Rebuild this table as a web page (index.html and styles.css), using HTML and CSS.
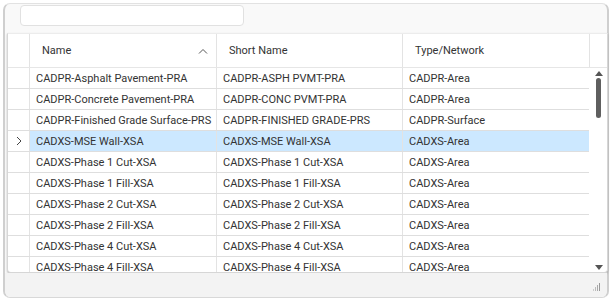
FILE: index.html
```html
<!DOCTYPE html>
<html lang="en">
<head>
    <meta charset="UTF-8">
    <title>Surface Styles</title>
    <link rel="stylesheet" href="styles.css">
</head>
<body>
    <div class="window">
        <div class="toolbar">
            <input class="search" type="text">
        </div>

        <div class="grid">
            <div class="grid-body">
                <div class="row header">
                    <div class="cell marker"></div>
                    <div class="cell">Name
                        <svg class="sort" width="10" height="6" viewBox="0 0 10 6"><path d="M1 5.5 L5 1.5 L9 5.5" fill="none" stroke="#555" stroke-width="1"/></svg>
                    </div>
                    <div class="cell">Short Name</div>
                    <div class="cell">Type/Network</div>
                    <div class="cell spare"></div>
                </div>
                <div class="row"><div class="cell marker"></div><div class="cell">CADPR-Asphalt Pavement-PRA</div><div class="cell">CADPR-ASPH PVMT-PRA</div><div class="cell">CADPR-Area</div></div>
                <div class="row"><div class="cell marker"></div><div class="cell">CADPR-Concrete Pavement-PRA</div><div class="cell">CADPR-CONC PVMT-PRA</div><div class="cell">CADPR-Area</div></div>
                <div class="row"><div class="cell marker"></div><div class="cell">CADPR-Finished Grade Surface-PRS</div><div class="cell">CADPR-FINISHED GRADE-PRS</div><div class="cell">CADPR-Surface</div></div>
                <div class="row selected"><div class="cell marker">
                    <svg width="6" height="10" viewBox="0 0 6 10"><path d="M1 1 L5 5 L1 9" fill="none" stroke="#444" stroke-width="1"/></svg>
                </div><div class="cell">CADXS-MSE Wall-XSA</div><div class="cell">CADXS-MSE Wall-XSA</div><div class="cell">CADXS-Area</div></div>
                <div class="row"><div class="cell marker"></div><div class="cell">CADXS-Phase 1 Cut-XSA</div><div class="cell">CADXS-Phase 1 Cut-XSA</div><div class="cell">CADXS-Area</div></div>
                <div class="row"><div class="cell marker"></div><div class="cell">CADXS-Phase 1 Fill-XSA</div><div class="cell">CADXS-Phase 1 Fill-XSA</div><div class="cell">CADXS-Area</div></div>
                <div class="row"><div class="cell marker"></div><div class="cell">CADXS-Phase 2 Cut-XSA</div><div class="cell">CADXS-Phase 2 Cut-XSA</div><div class="cell">CADXS-Area</div></div>
                <div class="row"><div class="cell marker"></div><div class="cell">CADXS-Phase 2 Fill-XSA</div><div class="cell">CADXS-Phase 2 Fill-XSA</div><div class="cell">CADXS-Area</div></div>
                <div class="row"><div class="cell marker"></div><div class="cell">CADXS-Phase 4 Cut-XSA</div><div class="cell">CADXS-Phase 4 Cut-XSA</div><div class="cell">CADXS-Area</div></div>
                <div class="row"><div class="cell marker"></div><div class="cell">CADXS-Phase 4 Fill-XSA</div><div class="cell">CADXS-Phase 4 Fill-XSA</div><div class="cell">CADXS-Area</div></div>
            </div>

            <!-- vertical scrollbar -->
            <div class="scrollbar">
                <div class="scroll-head"></div>
                <svg class="arrow" width="8" height="5" viewBox="0 0 8 5"><path d="M0 5 L4 0 L8 5 Z" fill="#555"/></svg>
                <div class="track"><div class="thumb"></div></div>
                <svg class="arrow" width="8" height="5" viewBox="0 0 8 5"><path d="M0 0 L4 5 L8 0 Z" fill="#555"/></svg>
            </div>
        </div>

        <div class="status">
            <svg class="grip" width="8" height="8" viewBox="0 0 8 8">
                <rect x="6" y="0" width="1" height="8" fill="#999"/>
                <rect x="4" y="2" width="1" height="6" fill="#aaa"/>
                <rect x="2" y="4" width="1" height="4" fill="#bbb"/>
                <rect x="0" y="6" width="1" height="2" fill="#ccc"/>
            </svg>
        </div>
    </div>
</body>
</html>
```

FILE: styles.css
```css
body {
    margin: 0;
    height: 304px;
    overflow: hidden;
    background-color: #ffffff;
    font-family: Roboto, "Liberation Sans", sans-serif;
    font-size: 11px;
    color: #333333;
}

.window {
    margin: 3px 0 0 3px;
    width: 606px;
    height: 295px;
    background-color: #f9f9f9;
    border-left: 2px solid #cfcfcf;
    border-top: 1px solid #e2e2e2;
    border-right: 2px solid #cfcfcf;
    border-bottom: 1px solid #d8d8d8;
    border-radius: 7px;
    display: flex;
    flex-direction: column;
    box-sizing: border-box;
}

.toolbar {
    height: 29px;
    flex-shrink: 0;
    padding: 1px 0 0 15px;
    box-sizing: border-box;
}

.search {
    display: block;
    width: 224px;
    height: 21px;
    margin: 0;
    border: 1px solid #e1e1e1;
    border-radius: 4px;
    background-color: #ffffff;
    box-sizing: border-box;
}

/* table frame */
.grid {
    margin-left: 2px;
    width: 601px;
    height: 240px;
    flex-shrink: 0;
    display: flex;
    background-color: #ffffff;
    border: 1px solid #d6d6d6;
    border-top-color: #ececec;
    border-radius: 0 0 4px 4px;
    box-shadow: 0 1px 2px rgba(0, 0, 0, 0.25);
    box-sizing: border-box;
    overflow: hidden;
}

.grid-body {
    width: 581px;
    display: flex;
    flex-direction: column;
}

.row {
    display: grid;
    grid-template-columns: 21px 187px 186px 187px;
    height: 21px;
    flex-shrink: 0;
    border-bottom: 1px solid #dedede;
    box-sizing: border-box;
}

.row.header {
    grid-template-columns: 21px 187px 186px 187px 19px;
    width: 600px;
    height: 34px;
    border-bottom: 1px solid #e6e6e6;
}

.cell {
    display: flex;
    align-items: center;
    padding-left: 6px;
    border-left: 1px solid #e3e3e3;
    white-space: nowrap;
    overflow: hidden;
}

.cell.marker {
    border-left: none;
    padding-left: 8px;
}

.header .cell {
    padding-left: 12px;
    position: relative;
}

.header .cell.marker {
    padding-left: 0;
}

.sort {
    position: absolute;
    right: 8px;
    top: 14px;
}

.row.selected {
    background-color: #cce8ff;
}

.row.selected .cell.marker {
    background-color: #ffffff;
}

.scrollbar {
    width: 18px;
    display: flex;
    flex-direction: column;
    align-items: center;
}

.scroll-head {
    height: 34px;
    width: 100%;
}

.arrow {
    margin: 3px 0 2px 1px;
}

.track {
    flex: 1;
    padding-left: 1px;
}

.thumb {
    width: 5px;
    height: 40px;
    border-radius: 3px;
    background-color: #5f5f5f;
}

.status {
    flex: 1;
    display: flex;
    justify-content: flex-end;
    align-items: flex-end;
    padding: 0 6px 6px 0;
    background-color: #f3f3f3;
    border-radius: 0 0 6px 6px;
}
```
